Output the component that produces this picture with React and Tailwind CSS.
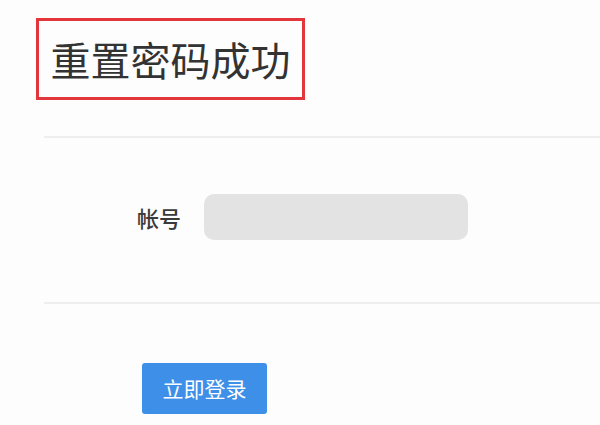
export default function App() {
  return (
    <div
      className="h-[425px] w-[600px] overflow-hidden bg-[#fdfdfd] text-[#333]"
      style={{ fontFamily: '"Noto Sans CJK SC", "Noto Sans", sans-serif' }}
    >
      <div className="pl-[36px] pt-[18px]">
        <div className="flex h-[82px] w-[269px] items-center justify-center border-[3px] border-[#e2353c]">
          <h1 className="text-[40px] leading-none font-normal text-[#333]">重置密码成功</h1>
        </div>
      </div>

      <div className="ml-[44px] mt-[36px] h-[2px] bg-[#eeeeee]" />

      <div className="flex items-center pl-[137px] pt-[56px]">
        <span className="w-[67px] text-[22px] leading-none font-medium text-[#3a3a3a]">帐号</span>
        <div className="h-[46px] w-[264px] rounded-[10px] bg-[#e3e3e3]" />
      </div>

      <div className="ml-[44px] mt-[62px] h-[2px] bg-[#eeeeee]" />

      <div className="pl-[142px] pt-[59px]">
        <button className="flex h-[51px] w-[125px] items-center justify-center rounded-[3px] bg-[#3d8fe8] text-[21px] text-white">
          立即登录
        </button>
      </div>
    </div>
  );
}
